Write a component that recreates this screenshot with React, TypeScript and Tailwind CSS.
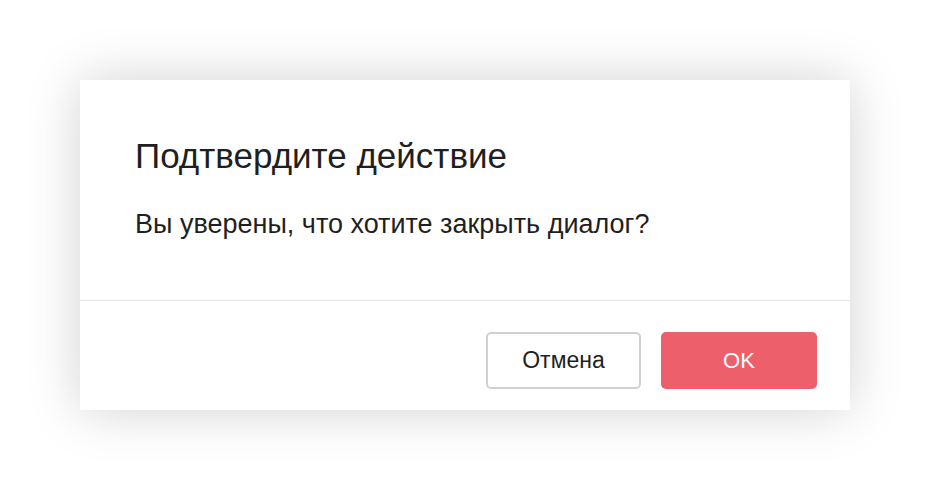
export default function App() {
  return (
    <div className="w-[930px] h-[490px] bg-white flex items-start justify-start" style={{ fontFamily: '"Liberation Sans", Arial, sans-serif' }}>
      <div className="ml-[80px] mt-[80px] w-[770px] h-[330px] bg-white flex flex-col shadow-[0_0_50px_rgba(0,0,0,0.18)]">
        <div className="h-[220px] pl-[55px] pt-[56px] flex flex-col">
          <h1 className="text-[35px] leading-[40px] text-[#1f1f1f]">Подтвердите действие</h1>
          <p className="mt-[32px] text-[27px] leading-[32px] text-[#1f1f1f]">Вы уверены, что хотите закрыть диалог?</p>
        </div>
        <div className="h-[1px] bg-[#e6e6e6]" />
        <div className="flex justify-end gap-[20px] pr-[33px] pt-[31px]">
          <button className="w-[155px] h-[57px] rounded-[5px] border-2 border-[#d0d0d0] bg-white text-[23px] text-[#1f1f1f]">Отмена</button>
          <button className="w-[156px] h-[57px] rounded-[5px] bg-[#ee5f6c] text-[22px] text-white">OK</button>
        </div>
      </div>
    </div>
  );
}
